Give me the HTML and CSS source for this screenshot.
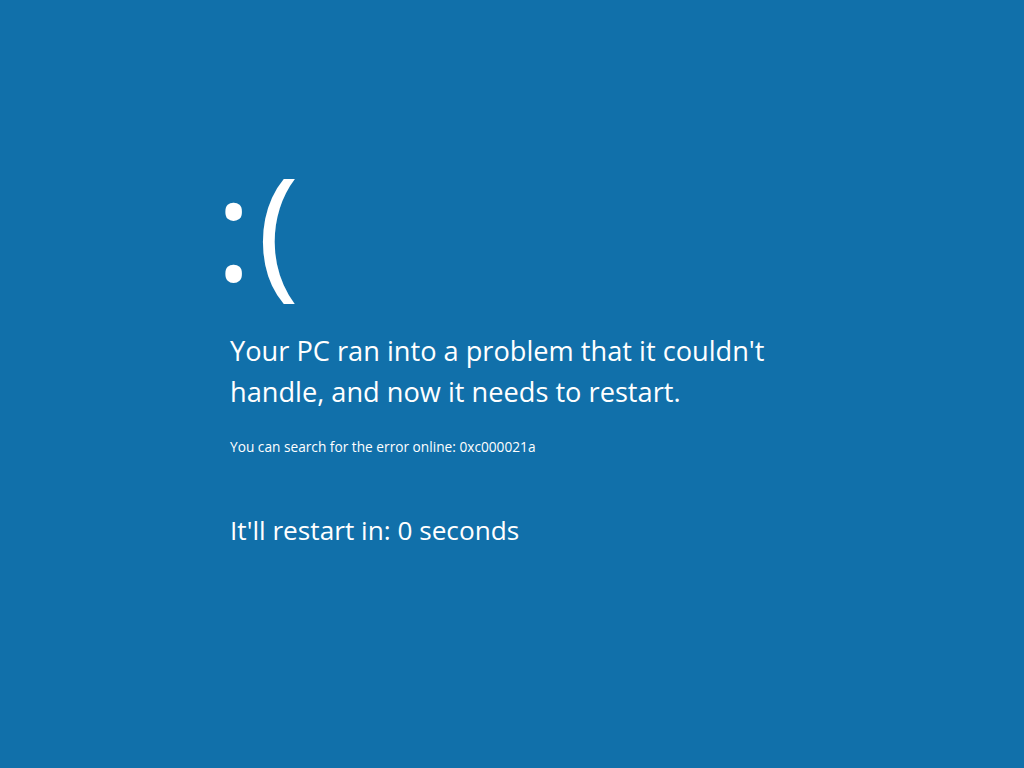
FILE: index.html
```html
<!DOCTYPE html>
<html lang="en">
  <head>
    <meta charset="UTF-8" />
    <meta name="viewport" content="width=device-width, initial-scale=1.0" />
    <title>Your PC ran into a problem</title>
    <link rel="stylesheet" href="styles.css">
  </head>
  <body>
    <div class="screen">
      <div class="face">:(</div>
      <p class="message">
        Your PC ran into a problem that it couldn't<br />
        handle, and now it needs to restart.
      </p>
      <p class="details">You can search for the error online: 0xc000021a</p>
      <p class="countdown">It'll restart in: <span id="seconds">0</span> seconds</p>
    </div>
  </body>
</html>
```

FILE: styles.css
```css
* {
  box-sizing: border-box;
  margin: 0;
  padding: 0;
}

html,
body {
  height: 100%;
}

body {
  background-color: #1170aa;
  color: #ffffff;
  font-family: "Open Sans", "Noto Sans", sans-serif;
  overflow: hidden;
}

.screen {
  padding: 126px 0 0 230px;
}

.face {
  font-size: 142px;
  font-weight: 400;
  line-height: 200px;
  letter-spacing: 5px;
  margin: 0 0 4px -15px;
}

.message {
  font-size: 27.2px;
  line-height: 41px;
}

.details {
  margin-top: 26px;
  font-size: 13.7px;
  line-height: 18px;
}

.countdown {
  margin-top: 58px;
  font-size: 26.2px;
  line-height: 32px;
}
```
